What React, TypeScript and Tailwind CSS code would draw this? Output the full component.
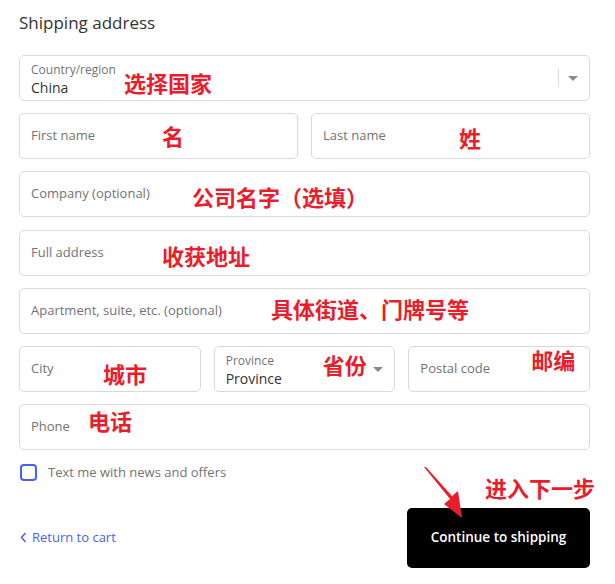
import type { ReactNode } from 'react'

const note = "absolute font-bold text-[22px] leading-[22px] text-[#ea1d2c] whitespace-nowrap font-['Noto_Sans_CJK_SC',sans-serif]"

type FieldProps = {
  placeholder?: string
  label?: string
  value?: string
  select?: boolean
  divider?: boolean
  className?: string
  children?: ReactNode
}

const Field = (props: FieldProps) => {
  return (
    <div className={`relative h-[46px] border border-[#d9d9d9] rounded-[5px] bg-white flex items-center pl-[11px] pr-[11px] ${props.className || ''}`}>
      {props.label ? (
        <div className="flex flex-col flex-1 pt-[3px]">
          <span className="text-[12px] leading-[16px] text-[#737373]">{props.label}</span>
          <span className="text-[14px] leading-[20px] text-[#333333]">{props.value}</span>
        </div>
      ) : (
        <span className="flex-1 text-[13px] text-[#737373]">{props.placeholder}</span>
      )}
      {props.divider && <div className="w-px h-[18px] bg-[#d9d9d9] mr-[9px]"></div>}
      {props.select && (
        <svg width="10" height="6" viewBox="0 0 10 6" className="mt-[1px]">
          <path d="M0 0h10L5 5z" fill="#8a8a8a" />
        </svg>
      )}
      {props.children}
    </div>
  )
}

const App = () => {
  return (
    <div className="relative w-[615px] h-[584px] bg-white pl-[19px] pr-[25px] font-['Open_Sans',sans-serif]">
      <h2 className="pt-[11px] text-[17px] leading-[24px] text-[#333333]">Shipping address</h2>

      <div className="flex flex-col gap-[12px] mt-[20px]">
        <Field label="Country/region" value="China" select divider>
          <span className={`${note} left-[104px] top-[15px]`}>选择国家</span>
        </Field>
        <div className="flex gap-[13px]">
          <Field placeholder="First name" className="flex-1">
            <span className={`${note} left-[142px] top-[10px]`}>名</span>
          </Field>
          <Field placeholder="Last name" className="flex-1">
            <span className={`${note} left-[147px] top-[12px]`}>姓</span>
          </Field>
        </div>
        <Field placeholder="Company (optional)">
          <span className={`${note} left-[172px] top-[13px]`}>公司名字（选填）</span>
        </Field>
        <Field placeholder="Full address" className="mt-px">
          <span className={`${note} left-[142px] top-[13px]`}>收获地址</span>
        </Field>
        <Field placeholder="Apartment, suite, etc. (optional)">
          <span className={`${note} left-[251px] top-[8px]`}>具体街道、门牌号等</span>
        </Field>
        <div className="flex gap-[13px]">
          <Field placeholder="City" className="flex-1">
            <span className={`${note} left-[83px] top-[15px]`}>城市</span>
          </Field>
          <Field label="Province" value="Province" select className="flex-1">
            <span className={`${note} left-[108px] top-[6px]`}>省份</span>
          </Field>
          <Field placeholder="Postal code" className="flex-1">
            <span className={`${note} left-[122px] top-[1px]`}>邮编</span>
          </Field>
        </div>
        <Field placeholder="Phone">
          <span className={`${note} left-[68px] top-[4px]`}>电话</span>
        </Field>
      </div>

      <label className="flex items-center gap-[11px] mt-[13px] ml-px">
        <span className="w-[17px] h-[17px] rounded-[4px] border-2 border-[#4b5ef7] bg-white"></span>
        <span className="text-[13px] text-[#737373]">Text me with news and offers</span>
      </label>

      <div className="relative flex items-center justify-between mt-[25px]">
        <a href="#" className="flex items-center gap-[5px] ml-px text-[13px] text-[#4c5fef]">
          <svg width="7" height="11" viewBox="0 0 7 11">
            <path d="M5.5 1L1.5 5.5l4 4.5" fill="none" stroke="#4c5fef" strokeWidth="1.5" />
          </svg>
          Return to cart
        </a>
        <button className="w-[183px] h-[60px] rounded-[5px] bg-black text-white text-[13.5px] font-semibold">
          Continue to shipping
        </button>
        <span className={`${note} left-[466px] top-[-32px]`}>进入下一步</span>
        <svg width="50" height="60" viewBox="0 0 50 60" className="absolute left-[405px] top-[-41px]">
          <path d="M0 0L1.5 -0.5L28 29L34 24L38 51L20 37L26 32Z" fill="#ea1d2c" />
        </svg>
      </div>
    </div>
  )
}

export default App
